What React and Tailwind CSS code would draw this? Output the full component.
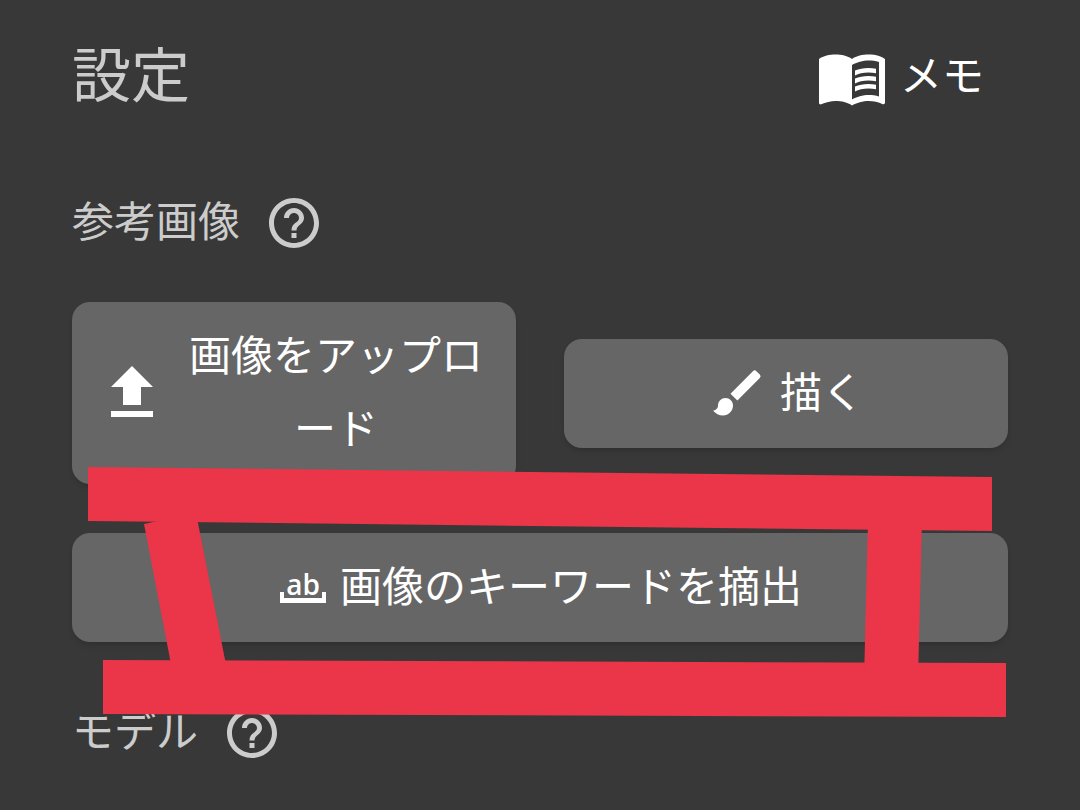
import clsx from 'clsx'
import { MdBrush, MdHelpOutline, MdMenuBook } from 'react-icons/md'

function UploadIcon() {
  return (
    <svg viewBox="0 0 24 24" fill="currentColor" className="size-18 shrink-0" aria-hidden="true">
      <path d="M9 16h6v-6h4l-7-7-7 7h4zm-4 2h14v2H5z" />
    </svg>
  )
}

function KeywordIcon() {
  return (
    <svg viewBox="0 0 50 48" fill="currentColor" className="h-12 w-[50px] shrink-0" aria-hidden="true">
      <path d="M2 28h4v6h38v-6h4v11H2z" />
      <text x="25" y="31" textAnchor="middle" fontSize="28" fontWeight="600" className="font-['Open_Sans',sans-serif]">
        ab
      </text>
    </svg>
  )
}

function ActionButton({ icon, wide = false, children }) {
  return (
    <button
      type="button"
      className={clsx(
        'flex items-center justify-center gap-3 rounded-[18px] bg-[#666666] px-6 py-[18px] leading-[73px] text-white shadow-md',
        wide && 'w-full',
      )}
    >
      {icon}
      <span className="[line-break:anywhere]">{children}</span>
    </button>
  )
}

function SectionHeading({ children }) {
  return (
    <div className="flex items-center gap-6 leading-[73px]">
      <h2>{children}</h2>
      <button type="button" aria-label={`${children}のヘルプ`}>
        <MdHelpOutline className="size-15" />
      </button>
    </div>
  )
}

// Red marker lines framing the keyword button
function Marker() {
  return (
    <svg
      viewBox="0 0 1080 810"
      fill="#eb3549"
      className="pointer-events-none absolute inset-x-0 top-0 w-full"
      aria-hidden="true"
    >
      <path d="M88 467 992 477V531L88 521z" />
      <path d="M103 660 1006 663V717L103 714z" />
      <path d="M144 524 196 513 231 690H176z" />
      <path d="M868 520H922L918 680H864z" />
    </svg>
  )
}

export default function App() {
  return (
    <main
      lang="ja"
      className="relative min-h-screen bg-[#383838] px-18 pt-10 pb-10 font-[Roboto,'Noto_Sans_CJK_JP',sans-serif] text-[42px] text-[#cccccc]"
    >
      <header className="flex items-center justify-between">
        <h1 className="text-[59px] leading-[73px]">設定</h1>
        <button type="button" className="flex items-center gap-3 px-6 leading-[73px] text-white">
          <MdMenuBook className="size-18" />
          メモ
        </button>
      </header>

      <section className="mt-[73px]">
        <SectionHeading>参考画像</SectionHeading>
        <div className="mt-[43px] grid grid-cols-2 items-center gap-12">
          <ActionButton icon={<UploadIcon />}>画像をアップロード</ActionButton>
          <ActionButton icon={<MdBrush className="size-15 shrink-0" />}>描く</ActionButton>
        </div>
        <div className="mt-[49px]">
          <ActionButton icon={<KeywordIcon />} wide>
            画像のキーワードを摘出
          </ActionButton>
        </div>
      </section>

      <section className="mt-[54px]">
        <SectionHeading>モデル</SectionHeading>
      </section>

      <Marker />
    </main>
  )
}
